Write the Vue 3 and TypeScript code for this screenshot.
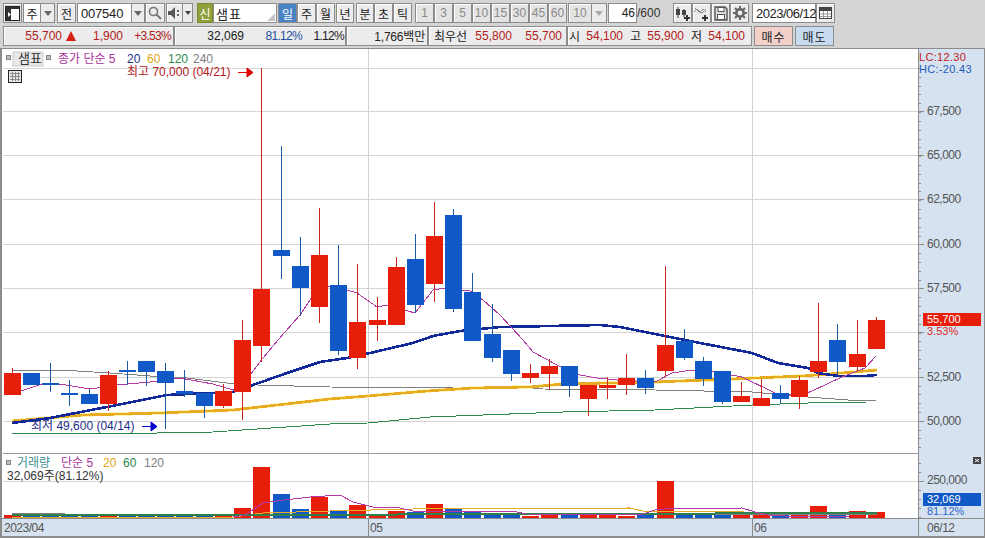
<script setup lang="ts">
type Candle = [number, number, number, number, 'r' | 'b']
const candles: Candle[] = [
  [368,395,373,395,'r'],[373,385,373,385,'b'],[363,392,383,385,'b'],[380,406,393,395,'b'],[389,404,394,404,'b'],
  [371,411,375,404,'r'],[361,385,370,372,'b'],[361,386,361,372,'b'],[363,429,371,383,'b'],[370,397,391,394,'b'],
  [393,418,393,406,'b'],[384,408,391,406,'r'],[320,420,340,392,'r'],[68,362,289,346,'r'],[146,279,250,256,'b'],
  [237,316,266,288,'b'],[208,323,255,307,'r'],[245,355,285,351,'b'],[264,369,322,358,'r'],[297,341,320,325,'r'],
  [257,325,267,325,'r'],[234,313,259,305,'b'],[202,302,236,284,'r'],[209,312,215,309,'b'],[273,341,292,341,'b'],
  [304,362,334,358,'b'],[350,381,350,374,'b'],[364,383,373,378,'r'],[359,390,366,374,'r'],[366,397,366,386,'b'],
  [385,416,385,399,'r'],[377,399,385,388,'r'],[354,395,378,385,'r'],[370,394,378,388,'b'],[266,377,345,371,'r'],
  [329,360,341,358,'b'],[357,386,361,379,'b'],[371,404,371,402,'b'],[382,402,396,402,'r'],[379,406,398,406,'r'],
  [385,404,393,399,'b'],[376,409,380,397,'r'],[303,378,361,372,'r'],[324,375,340,362,'b'],[320,371,354,367,'r'],
  [317,349,320,349,'r'],
]
const pitch = 19.2
const colX = (i: number) => Math.floor(4.2 + pitch * i)
const volTops: number[] = [515,516,516,516,516,515,516,516,516,516,516,515,508,467,494,509,497,510,505,515,
  511,512,504,509,512,513,515,516,513,515,515,515,516,515,481,513,514,514,515,515,515,515,506,513,511,512]
const volBars = volTops.map((top, i) => ({ x: colX(i), top, kind: candles[i][4] }))

const purple = '21,391 42,384 60,384 90,389 117,385 150,382 180,378 213,384 233,390 250,375 263,358 278,340 300,315 312,297 328,286 347,290 357,293 377,307 387,305 415,313 433,290 445,288 470,291 483,300 500,315 523,340 533,352 557,365 580,375 597,378 617,380 655,382 672,373 692,370 715,372 742,377 775,393 802,395 812,391 842,377 865,368 876,356'
const navy = '12,423 50,418 117,405 167,395 233,392 287,373 320,362 347,358 370,353 413,343 433,336 460,331 500,327 550,326 600,325 620,327 655,334 695,342 752,353 778,363 808,368 818,373 838,376 865,376 877,375'
const yellow = '12,421 83,415 160,413 233,410 330,399 368,396 427,391 473,388 530,387 563,384 655,382 732,379 802,376 842,373 877,370'
const green = '12,433 157,433 213,432 330,424 368,423 430,417 483,415 563,412 655,410 752,405 808,403 867,402'
const gray = '12,370 60,370 110,373 150,376 187,378 227,383 257,385 330,387 463,388 530,388 543,389 655,390 752,392 808,397 848,400 876,401'
const vPurple = '233,517 245,515 263,503 277,501 310,497 340,495 353,502 373,507 400,508 413,511 500,511 517,512 527,514 640,515 655,510 665,509 742,508 755,512 768,515 802,517 850,516'
const vYellow = '12,517 233,517 263,513 330,511 413,509 630,508 647,512 660,511 732,511 755,513 877,513'
const vGreen = '12,515 240,515 877,513'
const vGray = '12,513 60,513 70,515 877,514'

const hLines = [68, 111, 155, 199, 244, 288, 332, 377, 421]
const priceLabels = [
  { y: 115, t: '67,500' }, { y: 159, t: '65,000' }, { y: 203, t: '62,500' }, { y: 248, t: '60,000' },
  { y: 292, t: '57,500' }, { y: 381, t: '52,500' }, { y: 425, t: '50,000' },
]
const majorTicks = hLines.slice(1)
const minorTicks: number[] = []
for (let y = 68; y < 452; y += 8.82) minorTicks.push(Math.round(y))
const volTicks = [463, 472, 490, 499, 508, 517]

const days = ['일', '주', '월']
const mins = ['1', '3', '5', '10', '15', '30', '45', '60']

interface Cell { t: string; w: number; c: string }
const box1: Cell[] = [
  { t: '55,700', w: 58, c: 'red' },
]
const box1b: Cell[] = [
  { t: '1,900', w: 47, c: 'red' }, { t: '+3.53%', w: 48, c: 'red tight' },
]
const box2: Cell[] = [
  { t: '32,069', w: 69, c: 'ink' }, { t: '81.12%', w: 58, c: 'blue tight' }, { t: '1.12%', w: 42, c: 'ink tight' },
]
const box4: Cell[] = [
  { t: '최우선', w: 36, c: 'ink ko' }, { t: '55,800', w: 45, c: 'red' }, { t: '55,700', w: 50, c: 'red' },
]
const box5: Cell[] = [
  { t: '시', w: 12, c: 'ink ko' }, { t: '54,100', w: 43, c: 'red' }, { t: '고', w: 18, c: 'ink ko' },
  { t: '55,900', w: 43, c: 'red' }, { t: '저', w: 18, c: 'ink ko' }, { t: '54,100', w: 43, c: 'red' },
]
</script>

<template>
  <div class="app">
    <div class="toolbar">
      <button class="btn w19 dark-border">
        <svg width="15" height="15" viewBox="0 0 15 15"><rect x="0.5" y="0.5" width="14" height="14" fill="#fff" stroke="#222"/><rect x="1" y="1" width="13" height="2" fill="#333"/><rect x="1" y="3" width="5" height="11" fill="#333"/><path d="M3 6l3 2.500-3 2.500z" fill="#fff"/></svg>
      </button>
      <div class="field w18 ml1 ko center">주</div>
      <button class="drop w14"><i class="tri"></i></button>
      <button class="btn w19 ml2 ko">전</button>
      <div class="field w55 ml1 code">007540</div>
      <button class="drop w13"><i class="tri"></i></button>
      <button class="btn w20">
        <svg width="14" height="14" viewBox="0 0 14 14"><circle cx="5.500" cy="5.500" r="4" fill="none" stroke="#777" stroke-width="1.600"/><path d="M8.500 8.500l4.500 4.500" stroke="#777" stroke-width="2"/></svg>
      </button>
      <button class="btn w17 ml1">
        <svg width="13" height="12" viewBox="0 0 13 12"><path d="M0 4h3l4-4v12l-4-4H0z" fill="#555"/><rect x="9" y="3" width="2" height="2" fill="#666"/><rect x="9" y="7" width="2" height="2" fill="#666"/></svg>
      </button>
      <button class="drop w10"><i class="tri small"></i></button>
      <div class="sin ml4 ko">신</div>
      <div class="field w64 ko name">샘표<i class="corner"></i></div>
      <div class="ml1 seg">
        <button v-for="(d, i) in days" :key="d" class="btn w19 ko" :class="{ active: i === 0 }">{{ d }}</button>
      </div>
      <button class="btn w18 ml1 ko">년</button>
      <div class="ml2 seg">
        <button class="btn w18 ko">분</button>
        <button class="btn w19 ko">초</button>
        <button class="btn w19 ko">틱</button>
      </div>
      <div class="ml3 seg">
        <button v-for="m in mins" :key="m" class="btn w19 muted">{{ m }}</button>
      </div>
      <button class="btn w24 ml1 muted">10</button>
      <button class="drop w15"><i class="tri pale"></i></button>
      <div class="field w29 ml1 right">46</div>
      <span class="of">/600</span>
      <div class="seg">
        <button class="btn w19">
          <svg width="15" height="15" viewBox="0 0 15 15"><path d="M3 1v11M9 3v8" stroke="#444"/><rect x="1" y="3" width="4" height="6" fill="#444"/><rect x="7" y="4" width="4" height="5" fill="#444"/><path d="M12 9v6M9 12h6" stroke="#333" stroke-width="2"/></svg>
        </button>
        <button class="btn w19">
          <svg width="15" height="15" viewBox="0 0 15 15"><path d="M0 6l3-3 3 3 3-3 3 3M1 2l4 4 3 1 4-4" fill="none" stroke="#888"/><path d="M11 9v6M8 12h6" stroke="#333" stroke-width="2"/></svg>
        </button>
        <button class="btn w19">
          <svg width="14" height="15" viewBox="0 0 14 15"><path d="M1 1h10l2 2v11H1z" fill="#ddd" stroke="#555" stroke-width="1.400"/><rect x="4" y="1.500" width="6" height="4" fill="#fff" stroke="#555"/><rect x="3.500" y="8.500" width="7" height="5" fill="#fff" stroke="#555"/></svg>
        </button>
        <button class="btn w19">
          <svg width="14" height="14" viewBox="0 0 14 14"><circle cx="7" cy="7" r="3.700" fill="none" stroke="#666" stroke-width="2.600"/><path d="M7 0v3M7 11v3M0 7h3M11 7h3M2 2l2 2M10 10l2 2M12 2l-2 2M4 10l-2 2" stroke="#666" stroke-width="2"/></svg>
        </button>
      </div>
      <div class="field w64 ml3 date">2023/06/12</div>
      <button class="btn w19">
        <svg width="13" height="12" viewBox="0 0 13 12"><rect x="0.500" y="0.500" width="12" height="11" fill="#fff" stroke="#444"/><rect x="1" y="1" width="11" height="3" fill="#444"/><path d="M1 7h11M1 9.500h11M4.500 4v7M8.500 4v7" stroke="#999"/></svg>
      </button>
    </div>

    <div class="quote">
      <div class="qbox b1">
        <span v-for="c in box1" :key="c.t" class="cell" :class="c.c" :style="{ width: c.w + 'px' }">{{ c.t }}</span>
        <i class="up"></i>
        <span v-for="c in box1b" :key="c.t" class="cell" :class="c.c" :style="{ width: c.w + 'px' }">{{ c.t }}</span>
      </div>
      <div class="qbox b2">
        <span v-for="c in box2" :key="c.t" class="cell" :class="c.c" :style="{ width: c.w + 'px' }">{{ c.t }}</span>
      </div>
      <div class="qbox b3"><span class="cell ink amount">1,766<b class="ko">백만</b></span></div>
      <div class="qbox b4">
        <span v-for="(c, i) in box4" :key="i" class="cell" :class="c.c" :style="{ width: c.w + 'px' }">{{ c.t }}</span>
      </div>
      <div class="qbox b5">
        <span v-for="(c, i) in box5" :key="i" class="cell" :class="c.c" :style="{ width: c.w + 'px' }">{{ c.t }}</span>
      </div>
      <button class="trade buy ko">매수</button>
      <button class="trade sell ko">매도</button>
    </div>

    <svg class="chart" width="985" height="490" viewBox="0 48 985 490">
      <rect x="0" y="48" width="985" height="490" fill="#fff"/>
      <!-- axis panels -->
      <rect x="918" y="49" width="67" height="487" fill="#d6e2f0"/>
      <rect x="2" y="519" width="916" height="17" fill="#d6e2f0"/>

      <!-- grid -->
      <g class="crisp" stroke="#d4d4d4">
        <line v-for="y in hLines" :key="y" x1="3" :x2="918" :y1="y + 0.5" :y2="y + 0.5"/>
        <line x1="3" x2="918" y1="481.500" y2="481.500"/>
        <line x1="368.500" x2="368.500" y1="49" y2="519"/>
        <line x1="752.500" x2="752.500" y1="49" y2="519"/>
      </g>

      <!-- moving averages run behind the candles -->
      <g class="crisp">
        <polyline :points="gray" class="ln" stroke="#808080"/>
        <polyline :points="green" class="ln" stroke="#2b8b4b"/>
        <polyline :points="yellow" class="ln halo" stroke="#fff3b0"/>
        <polyline :points="yellow" class="ln thick" stroke="#e8ac22"/>
        <polyline :points="navy" class="ln thick" stroke="#12299a"/>
        <polyline :points="purple" class="ln" stroke="#b63aa6"/>
      </g>
      <g v-for="(c, i) in candles" :key="i" class="crisp">
        <rect :x="colX(i) + 8" :y="c[0]" width="1" :height="c[1] - c[0]" :class="c[4] === 'r' ? 'wick-r' : 'wick-b'"/>
        <rect :x="colX(i)" :y="c[2]" width="17" :height="c[3] - c[2]" :class="c[4] === 'r' ? 'body-r' : 'body-b'"/>
      </g>

      <!-- legend -->
      <rect x="6.500" y="55.500" width="4" height="4" fill="#bbb" stroke="#888"/>
      <rect x="13" y="52" width="30" height="14" fill="#e8e8e8" stroke="#ccc"/>
      <text x="18" y="63" class="ko t13" fill="#333">샘표</text>
      <rect x="46.500" y="55.500" width="4" height="4" fill="#bbb" stroke="#888"/>
      <text x="58" y="63" class="t12 ko" fill="#a8329a">종가 단순 5</text>
      <text x="127" y="63" class="t12" fill="#1c2f8c">20</text>
      <text x="147" y="63" class="t12" fill="#dfa520">60</text>
      <text x="168" y="63" class="t12" fill="#2b8b4b">120</text>
      <text x="193" y="63" class="t12" fill="#808080">240</text>

      <!-- small grid icon -->
      <rect x="8.500" y="70.500" width="13" height="12" fill="#e8e8e8" stroke="#222"/>
      <path class="crisp" d="M10 73.500h10M10 76.500h10M10 79.500h10M12.500 72v9M15.500 72v9M18.500 72v9" stroke="#888"/>

      <!-- high / low -->
      <text x="127" y="76" class="t12 ko" fill="#b01818">최고 70,000 (04/21)</text>
      <path d="M238 72.500h9M247 68l6 4.500-6 4.500z" stroke="#e00000" fill="#e00000"/>
      <text x="31" y="430" class="t12 ko" fill="#1c2f8c">최저 49,600 (04/14)</text>
      <path d="M142 426.500h9M151 422l6 4.500-6 4.500z" stroke="#0000d0" fill="#0000d0"/>

      <!-- volume -->
      <rect x="3" y="453" width="915" height="1" fill="#999"/>
      <rect x="6.500" y="460.500" width="4" height="4" fill="#bbb" stroke="#888"/>
      <text x="17" y="467" class="t12 ko" fill="#3c9090">거래량</text>
      <text x="61" y="467" class="t12 ko" fill="#a8329a">단순 5</text>
      <text x="103" y="467" class="t12" fill="#dfa520">20</text>
      <text x="123" y="467" class="t12" fill="#2b8b4b">60</text>
      <text x="144" y="467" class="t12" fill="#808080">120</text>
      <text x="7" y="480" class="t12 ko" fill="#333">32,069주(81.12%)</text>

      <g class="crisp">
        <rect v-for="(b, i) in volBars" :key="i" :x="b.x" :y="b.top" width="17" :height="518 - b.top" :class="b.kind === 'r' ? 'body-r' : 'body-b'"/>
        <polyline :points="vGray" class="ln" stroke="#808080"/>
        <polyline :points="vYellow" class="ln" stroke="#e8ac22"/>
        <polyline :points="vGreen" class="ln thick-v" stroke="#2f7f4a"/>
        <polyline :points="vPurple" class="ln" stroke="#b63aa6"/>
      </g>

      <!-- price axis -->
      <g class="crisp" stroke="#8c8c8c">
        <line v-for="(y, i) in minorTicks" :key="i" x1="918" x2="921" :y1="y + 0.5" :y2="y + 0.5"/>
        <line v-for="y in majorTicks" :key="'m' + y" x1="918" x2="924" :y1="y + 0.5" :y2="y + 0.5"/>
        <line v-for="y in volTicks" :key="'v' + y" x1="918" x2="921" :y1="y + 0.5" :y2="y + 0.5"/>
        <line x1="918" x2="924" y1="481.500" y2="481.500"/>
      </g>
      <text v-for="p in priceLabels" :key="p.t" x="927" :y="p.y" class="t12 axis">{{ p.t }}</text>
      <text x="919" y="61" class="t11 lc">LC:12.30</text>
      <text x="919" y="73" class="t11 hc">HC:-20.43</text>
      <rect x="923" y="313" width="58" height="13" fill="#e61e0a"/>
      <text x="927" y="323" class="t11" fill="#fff">55,700</text>
      <text x="927" y="335" class="t11" fill="#d62a22">3.53%</text>
      <text x="927" y="484" class="t12 axis">250,000</text>
      <rect x="923" y="493" width="58" height="13" fill="#1259c8"/>
      <text x="927" y="503" class="t11" fill="#fff">32,069</text>
      <text x="927" y="515" class="t11" fill="#2a64c8">81.12%</text>
      <rect x="973" y="457" width="8" height="7" fill="#444"/>
      <path d="M975 459l4 3M979 459l-4 3" stroke="#fff"/>

      <!-- frame lines -->
      <g class="crisp" stroke="#8c8c8c">
        <line x1="0" x2="985" y1="48.500" y2="48.500"/>
        <line x1="1" x2="1" y1="48" y2="538" stroke-width="2"/>
        <line x1="918.500" x2="918.500" y1="49" y2="536"/>
        <line x1="984.500" x2="984.500" y1="48" y2="538"/>
        <line x1="2" x2="985" y1="518.500" y2="518.500"/>
        <line x1="0" x2="985" y1="537" y2="537" stroke-width="2"/>
        <line x1="368.500" x2="368.500" y1="519" y2="536"/>
        <line x1="752.500" x2="752.500" y1="519" y2="536"/>
      </g>
      <text x="4" y="532" class="t12 axis">2023/04</text>
      <text x="370" y="532" class="t12 axis">05</text>
      <text x="754" y="532" class="t12 axis">06</text>
      <text x="927" y="532" class="t12 axis">06/12</text>
    </svg>
  </div>
</template>

<style scoped>
.app {
  width: 985px;
  height: 538px;
  overflow: hidden;
  display: flex;
  flex-direction: column;
  background: #d4d4d4;
  font-family: "Liberation Sans", "Noto Sans CJK KR", sans-serif;
  font-size: 12px;
  color: #222;
}
.toolbar {
  display: flex;
  height: 20px;
  margin: 3px 0 0 3px;
  align-items: stretch;
}
.quote {
  display: flex;
  height: 20px;
  margin: 3px 0 0 3px;
  align-items: stretch;
}
.chart { display: block; margin-top: 2px; flex: none; }
.seg { display: flex; }
button {
  font: inherit;
  padding: 0;
  margin: 0;
  display: flex;
  align-items: center;
  justify-content: center;
  box-sizing: border-box;
}
.btn {
  border: 1px solid #8c8c8c;
  background: #ececec;
  box-shadow: inset 1px 1px 0 #fff;
  color: #222;
}
.dark-border { background: #dcdcdc; }
.btn.active { background: #4a83c6; color: #fff; box-shadow: none; }
.btn.muted { color: #8a8a8a; background: #e4e4e4; }
.drop {
  border: 1px solid #8c8c8c;
  border-left: 0;
  background: #ececec;
}
.tri {
  width: 0;
  height: 0;
  border-left: 4px solid transparent;
  border-right: 4px solid transparent;
  border-top: 5px solid #666;
}
.tri.small { border-left-width: 3px; border-right-width: 3px; border-top-width: 4px; border-top-color: #444; }
.tri.pale { border-top-color: #aaa; }
.field {
  box-sizing: border-box;
  border: 1px solid #8c8c8c;
  background: #fff;
  display: flex;
  align-items: center;
  padding-left: 2px;
  color: #222;
  position: relative;
}
.center { justify-content: center; padding: 0; }
.right { justify-content: flex-end; padding: 0 1px 0 0; }
.code { font-size: 13px; letter-spacing: -0.2px; padding-left: 3px; }
.date { font-size: 13px; letter-spacing: -0.5px; padding-left: 3px; }
.name { font-size: 13px; letter-spacing: 1px; padding-left: 2px; }
.corner {
  position: absolute;
  right: 1px;
  bottom: 1px;
  width: 0;
  height: 0;
  border-left: 8px solid transparent;
  border-bottom: 8px solid #c4c4c4;
}
.sin {
  width: 16px;
  background: #8fa03c;
  color: #fff;
  display: flex;
  align-items: center;
  justify-content: center;
  box-sizing: border-box;
  border: 1px solid #7c8c30;
}
.of { width: 36px; line-height: 20px; color: #333; }
.ko { font-family: "Noto Sans CJK KR", "Liberation Sans", sans-serif; }
.w10 { width: 10px; } .w13 { width: 13px; } .w14 { width: 14px; } .w15 { width: 15px; }
.w17 { width: 17px; } .w18 { width: 18px; } .w19 { width: 19px; } .w20 { width: 20px; }
.w24 { width: 24px; } .w29 { width: 29px; } .w55 { width: 55px; } .w64 { width: 64px; }
.ml1 { margin-left: 1px; } .ml2 { margin-left: 2px; } .ml3 { margin-left: 3px; } .ml4 { margin-left: 4px; }

.qbox {
  box-sizing: border-box;
  display: flex;
  align-items: center;
  border: 1px solid #8c8c8c;
  border-left-width: 1px;
  background: #ececec;
  box-shadow: inset 1px 1px 0 #fff;
  line-height: 18px;
}
.b1 { width: 171px; }
.b2 { width: 172px; }
.b3 { width: 82px; justify-content: flex-end; padding-right: 2px; }
.b4 { width: 139px; padding-left: 2px; }
.b5 { width: 185px; }
.cell { display: block; text-align: right; white-space: nowrap; flex: none; }
.cell b { font-weight: 400; }
.amount { letter-spacing: -0.2px; }
.red { color: #b32020; }
.blue { color: #1c4fa0; }
.ink { color: #222; }
.tight { letter-spacing: -0.7px; }
.up {
  width: 0;
  height: 0;
  flex: none;
  margin-left: 4px;
  border-left: 5.500px solid transparent;
  border-right: 5.500px solid transparent;
  border-bottom: 10px solid #d81e10;
}
.trade {
  width: 39px;
  border: 1px solid #8c8c8c;
  margin-left: 2px;
  color: #222;
  letter-spacing: 1px;
}
.buy { background: #f3d0ca; }
.sell { background: #c8dcf0; }

.chart text { font-family: "Liberation Sans", "Noto Sans CJK KR", sans-serif; }
.chart .ko { font-family: "Liberation Sans", "Noto Sans CJK KR", sans-serif; }
.t11 { font-size: 11px; }
.t12 { font-size: 12px; }
.t13 { font-size: 13px; }
.axis { fill: #555; letter-spacing: -0.5px; }
.lc { fill: #c02020; letter-spacing: 0.3px; }
.hc { fill: #1f5ab8; letter-spacing: 0.3px; }
.crisp { shape-rendering: crispEdges; }
.ln { fill: none; stroke-width: 1; }
.thick { stroke-width: 2.600; }
.thick-v { stroke-width: 2; }
.halo { stroke-width: 3.600; }
.body-r { fill: #e61e0a; }
.body-b { fill: #1259c8; }
.wick-r { fill: #c8281e; }
.wick-b { fill: #1d5aa8; }
</style>
